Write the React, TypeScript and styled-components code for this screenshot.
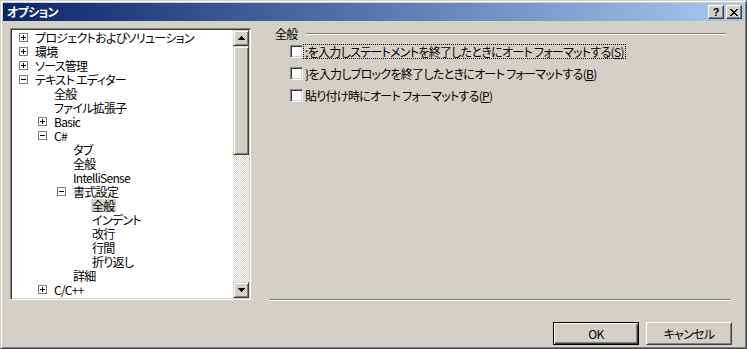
import React from 'react';
import styled, { createGlobalStyle } from 'styled-components';

const FONT = `"Noto Sans CJK JP", "Liberation Sans", sans-serif`;

const Global = createGlobalStyle`
  html, body { margin: 0; padding: 0; background: #D4D0C8; overflow: hidden; }
  body { font-family: ${FONT}; font-size: 12px; }
`;

const Window = styled.div`
  box-sizing: border-box;
  width: 747px;
  height: 349px;
  background: #d4d0c8;
  border: 1px solid;
  border-color: #d4d0c8 #404040 #404040 #d4d0c8;
  box-shadow: inset 1px 1px #fff, inset -1px -1px #808080;
  padding: 2px;
  display: flex;
  flex-direction: column;
  font-family: ${FONT};
  font-size: 12px;
  font-feature-settings: "palt";
  letter-spacing: -0.7px;
  color: #000;
`;

const TitleBar = styled.div`
  height: 18px;
  flex-shrink: 0;
  background: linear-gradient(to right, #0a246a, #a6caf0);
  display: flex;
  align-items: center;
  padding: 0 2px;
`;

const Title = styled.div`
  flex: 1;
  color: #fff;
  font-weight: bold;
  font-size: 12px;
  line-height: 18px;
  padding-left: 2px;
`;

const CaptionButtons = styled.div`
  display: flex;
  gap: 2px;
`;

const CaptionButton = styled.div`
  box-sizing: border-box;
  width: 16px;
  height: 14px;
  background: #d4d0c8;
  border: 1px solid;
  border-color: #fff #404040 #404040 #fff;
  box-shadow: inset -1px -1px #808080;
  display: flex;
  align-items: center;
  justify-content: center;
  font-family: "Liberation Sans", sans-serif;
  font-weight: bold;
  font-size: 11px;
  line-height: 12px;
  letter-spacing: 0;
`;

const Body = styled.div`
  flex: 1;
  display: flex;
  flex-direction: column;
  padding: 7px 12px 0 7px;
`;

const Main = styled.div`
  display: flex;
  gap: 19px;
  height: 272px;
`;

const Tree = styled.div`
  box-sizing: border-box;
  width: 241px;
  height: 272px;
  background: #fff;
  border: 1px solid;
  border-color: #808080 #fff #fff #808080;
  box-shadow: inset 1px 1px #404040, inset -1px -1px #d4d0c8;
  padding: 1px;
  display: flex;
`;

const TreeList = styled.div`
  flex: 1;
  overflow: hidden;
`;

const TreeRow = styled.div<{ $level: number }>`
  height: 14px;
  display: flex;
  align-items: center;
  padding-left: ${(p) => 3 + 19 * p.$level}px;
`;

const ExpSlot = styled.div`
  width: 16px;
  height: 14px;
  flex-shrink: 0;
  display: flex;
  align-items: center;
  justify-content: center;
`;

const TreeLabel = styled.span<{ $selected?: boolean }>`
  display: inline-block;
  margin-left: 3px;
  padding: 0 1px;
  height: 13px;
  line-height: 13px;
  white-space: nowrap;
  background: ${(p) => (p.$selected ? '#d4d0c8' : 'transparent')};
`;

const ScrollBar = styled.div`
  width: 16px;
  display: flex;
  flex-direction: column;
`;

const Raised = styled.div`
  box-sizing: border-box;
  background: #d4d0c8;
  border: 1px solid;
  border-color: #d4d0c8 #404040 #404040 #d4d0c8;
  box-shadow: inset 1px 1px #fff, inset -1px -1px #808080;
`;

const ScrollButton = styled(Raised)`
  width: 16px;
  height: 16px;
  display: flex;
  align-items: center;
  justify-content: center;
`;

const Thumb = styled(Raised)`
  width: 16px;
  height: 109px;
`;

const Track = styled.div`
  flex: 1;
  background: repeating-conic-gradient(#d4d0c8 0% 25%, #fff 0% 50%) 0 0 / 2px 2px;
`;

const Panel = styled.div`
  flex: 1;
  display: flex;
  flex-direction: column;
  margin-right: 2px;
  border-bottom: 1px solid #808080;
  box-shadow: 0 1px #fff;
`;

const GroupHeader = styled.div`
  display: flex;
  height: 12px;
  padding: 0 4px 0 5px;
`;

const GroupTitle = styled.span`
  display: inline-block;
  height: 12px;
  line-height: 12px;
`;

const GroupLine = styled.div`
  flex: 1;
  margin: 5px 0 0 8px;
  height: 0;
  border-top: 1px solid #808080;
  border-bottom: 1px solid #fff;
`;

const CheckList = styled.div`
  display: flex;
  flex-direction: column;
  padding-left: 20px;
`;

const CheckRow = styled.div`
  height: 22px;
  display: flex;
  align-items: center;
`;

const CheckBox = styled.div`
  box-sizing: border-box;
  width: 13px;
  height: 13px;
  flex-shrink: 0;
  background: #fff;
  border: 1px solid;
  border-color: #808080 #fff #fff #808080;
  box-shadow: inset 1px 1px #404040, inset -1px -1px #d4d0c8;
`;

const CheckLabel = styled.span<{ $focused?: boolean }>`
  display: inline-block;
  margin-left: 1px;
  padding: 0 1px;
  height: 13px;
  line-height: 13px;
  white-space: nowrap;
  outline: ${(p) => (p.$focused ? '1px dotted #000' : 'none')};
`;

const Footer = styled.div`
  display: flex;
  justify-content: flex-end;
  gap: 7px;
  margin-top: 22px;
`;

const Button = styled.div<{ $default?: boolean }>`
  box-sizing: border-box;
  width: 86px;
  height: 23px;
  display: flex;
  align-items: center;
  justify-content: center;
  background: #d4d0c8;
  border: 1px solid;
  border-color: ${(p) => (p.$default ? '#000' : '#fff #404040 #404040 #fff')};
  box-shadow: ${(p) =>
    p.$default
      ? 'inset 1px 1px #fff, inset -1px -1px #404040, inset -2px -2px #808080'
      : 'inset 1px 1px #d4d0c8, inset -1px -1px #808080'};
`;

const Expander = ({ open }: { open: boolean }) => (
  <svg width="9" height="9" viewBox="0 0 9 9" shapeRendering="crispEdges">
    <rect x="0.5" y="0.5" width="8" height="8" fill="#fff" stroke="#808080" />
    <rect x="2" y="4" width="5" height="1" fill="#000" />
    {!open && <rect x="4" y="2" width="1" height="5" fill="#000" />}
  </svg>
);

const Arrow = ({ down }: { down?: boolean }) => (
  <svg width="7" height="4" viewBox="0 0 7 4" shapeRendering="crispEdges">
    {down ? (
      <>
        <rect x="0" y="0" width="7" height="1" />
        <rect x="1" y="1" width="5" height="1" />
        <rect x="2" y="2" width="3" height="1" />
        <rect x="3" y="3" width="1" height="1" />
      </>
    ) : (
      <>
        <rect x="3" y="0" width="1" height="1" />
        <rect x="2" y="1" width="3" height="1" />
        <rect x="1" y="2" width="5" height="1" />
        <rect x="0" y="3" width="7" height="1" />
      </>
    )}
  </svg>
);

const CloseGlyph = () => (
  <svg width="8" height="7" viewBox="0 0 8 7" shapeRendering="crispEdges">
    <rect x="0" y="0" width="2" height="1" />
    <rect x="6" y="0" width="2" height="1" />
    <rect x="1" y="1" width="2" height="1" />
    <rect x="5" y="1" width="2" height="1" />
    <rect x="2" y="2" width="4" height="1" />
    <rect x="3" y="3" width="2" height="1" />
    <rect x="2" y="4" width="4" height="1" />
    <rect x="1" y="5" width="2" height="1" />
    <rect x="5" y="5" width="2" height="1" />
    <rect x="0" y="6" width="2" height="1" />
    <rect x="6" y="6" width="2" height="1" />
  </svg>
);

type Item = { label: string; level: number; exp?: 'plus' | 'minus'; selected?: boolean };

const items: Item[] = [
  { label: 'プロジェクトおよびソリューション', level: 0, exp: 'plus' },
  { label: '環境', level: 0, exp: 'plus' },
  { label: 'ソース管理', level: 0, exp: 'plus' },
  { label: 'テキスト エディター', level: 0, exp: 'minus' },
  { label: '全般', level: 1 },
  { label: 'ファイル拡張子', level: 1 },
  { label: 'Basic', level: 1, exp: 'plus' },
  { label: 'C#', level: 1, exp: 'minus' },
  { label: 'タブ', level: 2 },
  { label: '全般', level: 2 },
  { label: 'IntelliSense', level: 2 },
  { label: '書式設定', level: 2, exp: 'minus' },
  { label: '全般', level: 3, selected: true },
  { label: 'インデント', level: 3 },
  { label: '改行', level: 3 },
  { label: '行間', level: 3 },
  { label: '折り返し', level: 3 },
  { label: '詳細', level: 2 },
  { label: 'C/C++', level: 1, exp: 'plus' },
  { label: 'CSS', level: 1, exp: 'plus' },
];

const options = [
  { pre: ';を入力しステートメントを終了したときにオート フォーマットする(', key: 'S', focused: true },
  { pre: '}を入力しブロックを終了したときにオート フォーマットする(', key: 'B' },
  { pre: '貼り付け時にオート フォーマットする(', key: 'P' },
];

export default function App() {
  return (
    <>
      <Global />
      <Window>
        <TitleBar>
          <Title>オプション</Title>
          <CaptionButtons>
            <CaptionButton>?</CaptionButton>
            <CaptionButton>
              <CloseGlyph />
            </CaptionButton>
          </CaptionButtons>
        </TitleBar>
        <Body>
          <Main>
            <Tree>
              <TreeList>
                {items.map((it, i) => (
                  <TreeRow key={i} $level={it.level}>
                    <ExpSlot>{it.exp && <Expander open={it.exp === 'minus'} />}</ExpSlot>
                    <TreeLabel $selected={it.selected}>{it.label}</TreeLabel>
                  </TreeRow>
                ))}
              </TreeList>
              <ScrollBar>
                <ScrollButton>
                  <Arrow />
                </ScrollButton>
                <Thumb />
                <Track />
                <ScrollButton>
                  <Arrow down />
                </ScrollButton>
              </ScrollBar>
            </Tree>
            <Panel>
              <GroupHeader>
                <GroupTitle>全般</GroupTitle>
                <GroupLine />
              </GroupHeader>
              <CheckList>
                {options.map((o) => (
                  <CheckRow key={o.key}>
                    <CheckBox />
                    <CheckLabel $focused={o.focused}>
                      {o.pre}
                      <u>{o.key}</u>)
                    </CheckLabel>
                  </CheckRow>
                ))}
              </CheckList>
            </Panel>
          </Main>
          <Footer>
            <Button $default>OK</Button>
            <Button>キャンセル</Button>
          </Footer>
        </Body>
      </Window>
    </>
  );
}
